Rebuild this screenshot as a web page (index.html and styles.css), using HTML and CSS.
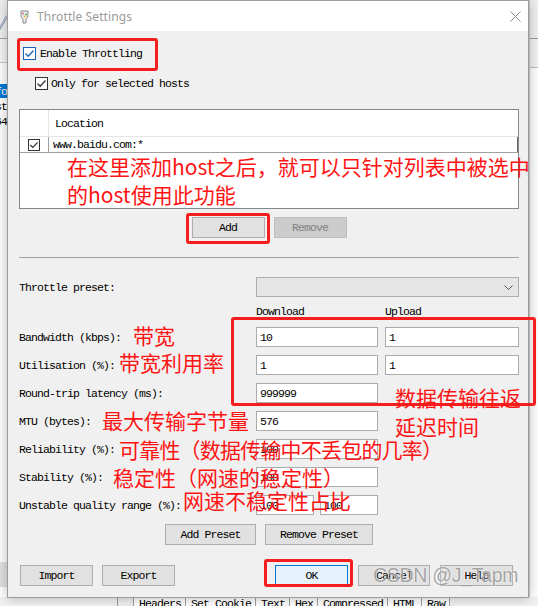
FILE: index.html
```html
<!DOCTYPE html>
<html>
<head>
<meta charset="utf-8">
<link rel="stylesheet" href="styles.css">
</head>
<body>
<div class="app">
  <div class="app-main">
    <div class="app-left">
      <div class="tb"><svg class="pen" width="8" height="18" viewBox="0 0 8 18"><path d="M-1 17 L7 3" stroke="#7a8ca8" stroke-width="2"/><path d="M0 15 L8 1" stroke="#c8d0dc" stroke-width="1"/></svg></div>
      <div class="pane2"></div>
      <div class="list">
        <div class="li sel"><span>Info</span></div>
        <div class="li"><span>Host</span></div>
        <div class="li"><span>x64</span></div>
      </div>
      <div class="grayblk"></div>
    </div>
    <div class="app-center"></div>
    <div class="app-right">
      <div class="r1"></div>
      <div class="r2"></div>
    </div>
  </div>
  <div class="app-tabs">
    <span class="gutter"></span>
    <span class="tab">Headers</span>
    <span class="tab">Set Cookie</span>
    <span class="tab">Text</span>
    <span class="tab">Hex</span>
    <span class="tab">Compressed</span>
    <span class="tab">HTML</span>
    <span class="tab">Raw</span>
  </div>
</div>

<div class="window">
  <div class="titlebar">
    <svg class="app-icon" width="9" height="14" viewBox="0 0 9 14"><path d="M1 1h7v6l-2 2v4H3V9L1 7z" fill="#ececec" stroke="#8a8a8a"/><circle cx="3" cy="3.5" r="1" fill="#e0609e"/><circle cx="6" cy="4.5" r="1" fill="#5ab85a"/><circle cx="4.5" cy="6.5" r="1" fill="#e8b830"/></svg>
    <span class="title">Throttle Settings</span>
    <svg class="close" width="11" height="11" viewBox="0 0 11 11"><path d="M0.5 0.5 L10.5 10.5 M10.5 0.5 L0.5 10.5" stroke="#8a8a8a" stroke-width="1"/></svg>
  </div>

  <div class="content">
    <div class="check-row enable">
      <span class="cb focus"><svg width="11" height="11" viewBox="0 0 11 11"><path d="M1.5 5.5 L4.2 8.2 L9.5 2.5" fill="none" stroke="#1a63b8" stroke-width="1.3"/></svg></span>
      <span>Enable Throttling</span>
    </div>
    <div class="check-row only">
      <span class="cb"><svg width="11" height="11" viewBox="0 0 11 11"><path d="M1.5 5.5 L4.2 8.2 L9.5 2.5" fill="none" stroke="#333" stroke-width="1.3"/></svg></span>
      <span>Only for selected hosts</span>
    </div>

    <div class="hosts">
      <div class="hosts-head">
        <div class="c1"></div>
        <div class="c2">Location</div>
      </div>
      <div class="hosts-row">
        <div class="c1"><span class="cb small"><svg width="10" height="10" viewBox="0 0 10 10"><path d="M1.3 5 L3.8 7.5 L8.7 2.3" fill="none" stroke="#333" stroke-width="1.2"/></svg></span></div>
        <div class="c2">www.baidu.com:*</div>
      </div>
    </div>

    <div class="btn-row hosts-btns">
      <button class="btn">Add</button>
      <button class="btn disabled">Remove</button>
    </div>

    <hr class="sep">

    <div class="form">
      <span class="lbl">Throttle preset:</span>
      <div class="select"><svg width="9" height="5" viewBox="0 0 9 5"><path d="M0.5 0.5 L4.5 4.5 L8.5 0.5" fill="none" stroke="#555" stroke-width="1"/></svg></div>

      <span></span><span class="colhead">Download</span><span class="colhead">Upload</span>

      <span class="lbl">Bandwidth (kbps):</span><div class="input">10</div><div class="input">1</div>
      <span class="lbl">Utilisation (%):</span><div class="input">1</div><div class="input">1</div>
      <span class="lbl">Round-trip latency (ms):</span><div class="input">999999</div><span></span>
      <span class="lbl">MTU (bytes):</span><div class="input">576</div><span></span>
      <span class="lbl">Reliability (%):</span><div class="input">100</div><span></span>
      <span class="lbl">Stability (%):</span><div class="input">100</div><span></span>
      <span class="lbl">Unstable quality range (%):</span><div class="pair"><div class="input">100</div><div class="input">100</div></div><span></span>
    </div>

    <div class="btn-row preset-btns">
      <button class="btn w91">Add Preset</button>
      <button class="btn w108">Remove Preset</button>
    </div>

    <div class="footer">
      <div class="group left">
        <button class="btn">Import</button>
        <button class="btn">Export</button>
      </div>
      <div class="group right">
        <button class="btn primary">OK</button>
        <button class="btn w72">Cancel</button>
        <button class="btn">Help</button>
      </div>
    </div>
  </div>

  <div class="redbox box-enable"></div>
  <div class="redbox box-add"></div>
  <div class="redbox box-fields"></div>
  <div class="redbox box-ok"></div>

  <div class="note n-host">在这里添加host之后，就可以只针对列表中被选中<br>的host使用此功能</div>
  <div class="note n-bw">带宽</div>
  <div class="note n-util">带宽利用率</div>
  <div class="note n-rtt">数据传输往返<br>延迟时间</div>
  <div class="note n-mtu">最大传输字节量</div>
  <div class="note n-rel">可靠性（数据传输中不丢包的几率）</div>
  <div class="note n-stab">稳定性（网速的稳定性）</div>
  <div class="note n-unst">网速不稳定性占比</div>

  <div class="watermark">CSDN @J_Tapm</div>
</div>
</body>
</html>
```

FILE: styles.css
```css
* { box-sizing: border-box; }

body {
  margin: 0;
  width: 538px;
  height: 606px;
  overflow: hidden;
  position: relative;
  background: #fff;
  font-family: "Liberation Mono", "DejaVu Sans Mono", monospace;
  font-size: 11.5px;
  letter-spacing: -0.9px;
  color: #000;
}

/* ---------- background application ---------- */
.app {
  display: grid;
  grid-template-rows: 597px 9px;
  height: 606px;
}
.app-main { display: flex; }
.app-left {
  width: 7px;
  display: flex;
  flex-direction: column;
  overflow: hidden;
}
.app-left .tb {
  height: 39px;
  background: #f0f0f0;
  border-bottom: 1px solid #a0a0a0;
  padding-top: 13px;
}
.pen { display: block; }
.app-left .pane2 {
  height: 24px;
  background: #f6f6f6;
  border-bottom: 1px solid #c8c8c8;
}
.app-left .list { padding-top: 21px; }
.app-left .li {
  height: 14px;
  display: flex;
  justify-content: flex-end;
  align-items: center;
  white-space: nowrap;
  overflow: hidden;
}
.app-left .li.sel { background: #0078d7; color: #fff; }
.app-left .li + .li { margin-top: 1px; }
.grayblk {
  margin-top: 434px;
  height: 25px;
  background: #e2e2e2;
}
.app-center { flex: 1; }
.app-right {
  width: 9px;
  border-left: 1px solid #d0d0d0;
}
.app-right .r1 { height: 39px; background: #f0f0f0; border-bottom: 1px solid #a0a0a0; }
.app-right .r2 { height: 29px; background: #f3f3f3; border-bottom: 1px solid #c0c0c0; }

.app-tabs {
  display: flex;
  align-items: flex-start;
  padding-left: 117px;
  background: #f2f2f2;
  line-height: 13px;
  white-space: nowrap;
}
.gutter {
  width: 17px;
  height: 13px;
  border-left: 1px solid #a0a0a0;
  border-right: 1px solid #a0a0a0;
  background: #f0f0f0;
}
.tab {
  padding: 0 4px 0 5px;
  border-right: 1px solid #a0a0a0;
  background: #fff;
  height: 13px;
}

/* ---------- dialog window ---------- */
.window {
  position: absolute;
  left: 7px;
  top: 0;
  width: 522px;
  height: 598px;
  border: 1px solid #9c9c9c;
  background: #f0f0f0;
  box-shadow: 0 0 12px rgba(0, 0, 0, 0.28);
}

.titlebar {
  height: 30px;
  background: #fff;
  display: flex;
  align-items: center;
  padding: 0 7px 0 12px;
}
.app-icon { display: block; margin-top: 1px; }
.title {
  margin-left: 8px;
  font-family: "Noto Sans", "Liberation Sans", sans-serif;
  font-size: 12px;
  letter-spacing: 0.1px;
  color: #9a9a9a;
  flex: 1;
}
.close { display: block; }

.content {
  padding: 16px 9px 11px 11px;
}

.check-row {
  display: flex;
  align-items: center;
  height: 13px;
  white-space: nowrap;
}
.check-row.enable { margin-left: 4px; gap: 4px; }
.check-row.only { margin-left: 16px; margin-top: 17px; gap: 3px; }

.cb {
  width: 13px;
  height: 13px;
  border: 1px solid #333;
  background: #fff;
  display: grid;
  place-items: center;
  flex: none;
}
.cb svg { display: block; }
.cb.focus { border-color: #1a63b8; }
.cb.small { width: 12px; height: 12px; }

.hosts {
  margin-top: 19px;
  height: 100px;
  border: 1px solid #828790;
  background: #fff;
}
.hosts-head {
  display: flex;
  height: 27px;
  border-bottom: 1px solid #e5e5e5;
}
.hosts-head .c1 {
  width: 29px;
  border-right: 1px solid #e5e5e5;
}
.hosts-head .c2 {
  flex: 1;
  padding-left: 6px;
  display: flex;
  align-items: center;
}
.hosts-row {
  display: flex;
  height: 16px;
  border-bottom: 1px solid #a0a0a0;
}
.hosts-row .c1 {
  width: 29px;
  border-right: 1px solid #a0a0a0;
  display: grid;
  place-items: center;
}
.hosts-row .c2 {
  flex: 1;
  padding-left: 4px;
  display: flex;
  align-items: center;
  border-right: 1px solid #6a6a6a;
}

.btn-row {
  display: flex;
  justify-content: center;
  gap: 9px;
}
.hosts-btns { margin-top: 8px; }

.btn {
  width: 73px;
  height: 21px;
  padding: 0;
  margin: 0;
  background: #e1e1e1;
  border: 1px solid #adadad;
  font: inherit;
  letter-spacing: inherit;
  color: #000;
}
.btn.disabled {
  background: #cccccc;
  border-color: #bfbfbf;
  color: #838383;
}
.btn.primary {
  background: #e5f1fb;
  border-color: #0078d7;
}
.btn.w91 { width: 91px; }
.btn.w108 { width: 108px; }
.btn.w72 { width: 72px; }

.sep {
  margin: 19px 0 0;
  border: 0;
  border-top: 1px solid #a0a0a0;
  height: 0;
}

.form {
  margin-top: 19px;
  display: grid;
  grid-template-columns: 230px 122px 134px;
  grid-template-rows: 20px 14px repeat(7, 20px);
  column-gap: 7px;
  row-gap: 8px;
  align-items: center;
}
.lbl { white-space: nowrap; }
.select {
  grid-column: 2 / 4;
  height: 20px;
  background: #e5e5e5;
  border: 1px solid #adadad;
  display: flex;
  justify-content: flex-end;
  align-items: center;
  padding-right: 5px;
}
.select svg { display: block; }
.colhead { line-height: 14px; }
.input {
  height: 20px;
  background: #fff;
  border: 1px solid #ababab;
  padding-left: 3px;
  display: flex;
  align-items: center;
}
.pair {
  display: flex;
  gap: 6px;
}
.pair .input { flex: 1; }

.preset-btns { margin-top: 9px; }

.footer {
  margin-top: 20px;
  display: flex;
  justify-content: space-between;
  padding: 0 6px 0 1px;
}
.group { display: flex; }
.group.left { gap: 9px; }
.group.right { gap: 10px; }

/* ---------- annotation overlays ---------- */
.redbox {
  position: absolute;
  border: 3px solid #f51d1d;
  border-radius: 3px;
}
.box-enable { left: 9px; top: 37px; width: 141px; height: 33px; }
.box-add { left: 178px; top: 212px; width: 84px; height: 31px; }
.box-fields { left: 223px; top: 316px; width: 305px; height: 89px; }
.box-ok { left: 256px; top: 558px; width: 89px; height: 28px; }

.note {
  position: absolute;
  font-family: "Noto Sans CJK SC", "Noto Sans", sans-serif;
  font-size: 21px;
  line-height: 28px;
  letter-spacing: 0;
  color: #ff1414;
  white-space: nowrap;
}
.n-host { left: 59px; top: 151px; }
.n-bw { left: 125px; top: 320px; }
.n-util { left: 111px; top: 347px; }
.n-rtt { left: 387px; top: 382px; line-height: 29px; }
.n-mtu { left: 94px; top: 405px; }
.n-rel { left: 111px; top: 434px; letter-spacing: -0.8px; }
.n-stab { left: 105px; top: 462px; }
.n-unst { left: 175px; top: 485px; }

.watermark {
  position: absolute;
  left: 365px;
  top: 563px;
  font-family: "Liberation Sans", sans-serif;
  font-size: 19.5px;
  line-height: 22px;
  letter-spacing: -0.3px;
  color: rgba(150, 150, 150, 0.85);
  text-shadow: 0 0 2px #fff;
  white-space: nowrap;
}
```
